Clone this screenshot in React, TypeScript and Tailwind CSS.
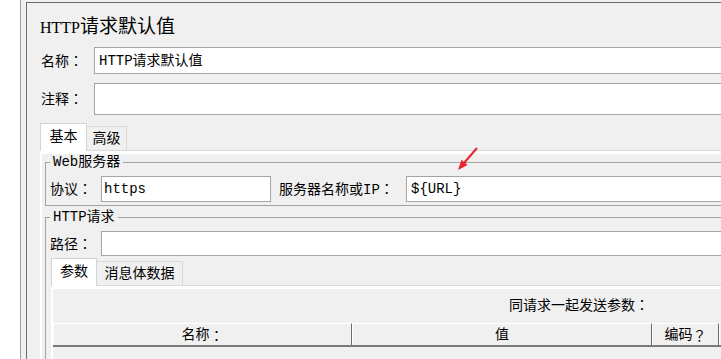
const field = 'border border-[#a5a5a5] bg-white';

// centred full-width colon, as in the reference font
const C = () => <span className="font-['Noto_Sans_CJK_JP',sans-serif]">：</span>;

const Tab = ({ label, active, w }: { label: string; active?: boolean; w: string }) =>
  active ? (
    <div className={`${w} flex h-[28px] items-center justify-center border border-b-0 border-[#d4d4d4] bg-white pb-[2px]`}>{label}</div>
  ) : (
    <div className={`${w} flex h-[25px] items-center justify-center border border-l-0 border-[#d9d9d9] bg-[#f0f0f0]`}>{label}</div>
  );

const headCell = 'flex items-center justify-center border-l border-r border-t border-l-white border-r-[#6d6d6d] border-t-white';

export default function App() {
  return (
    <div className="relative flex h-[359px] w-[721px] overflow-hidden bg-[#f0f0f0] text-[14px] leading-[16px] text-black font-['Liberation_Mono','Noto_Sans_CJK_SC',monospace]">
      {/* tree pane */}
      <div className="w-[21px] shrink-0 border-r border-[#a0a0a0] bg-white" />

      <div className="ml-[5px] mt-[2px] w-[780px] shrink-0 border-l border-t border-[#6b6b6b] pl-[13px]">
        <div className="h-[44px] pt-[14px] leading-[20px] font-['Liberation_Serif','Noto_Sans_CJK_SC',serif]">
          <span className="text-[16px]">HTTP</span>
          <span className="text-[19px]">请求默认值</span>
        </div>

        <div className="flex h-[27px] items-center pl-[1px]">
          <span className="w-[53px]">名称<C /></span>
          <div className={`${field} flex h-full flex-1 items-center px-[4px]`}>HTTP请求默认值</div>
        </div>
        <div className="mt-[9px] flex h-[32px] items-center pl-[1px]">
          <span className="w-[53px]">注释<C /></span>
          <div className={`${field} h-full flex-1`} />
        </div>

        {/* 基本 / 高级 */}
        <div className="mt-[8px] flex h-[28px] items-end">
          <Tab label="基本" active w="w-[47px]" />
          <Tab label="高级" w="w-[40px]" />
          <div className="flex-1 border-b border-[#d9d9d9]" />
        </div>
        <div className="border-l-2 border-t-[3px] border-white pl-[3px]">
          <fieldset className="border border-[#a3a3a3] px-[4px] pb-[3px]">
            <legend className="px-[3px] leading-[16px]">Web服务器</legend>
            <div className="mt-[6px] flex h-[26px] items-center">
              <span className="w-[51px]">协议<C /></span>
              <div className={`${field} flex h-full w-[170px] items-center px-[2px]`}>https</div>
              <span className="ml-[8px] w-[127px]">服务器名称或IP<C /></span>
              <div className={`${field} flex h-full flex-1 items-center px-[4px]`}>{'${URL}'}</div>
            </div>
          </fieldset>

          <fieldset className="mt-[3px] border border-[#a3a3a3] px-[4px]">
            <legend className="px-[3px] leading-[16px]">HTTP请求</legend>
            <div className="mt-[6px] flex h-[25px] items-center">
              <span className="w-[51px]">路径<C /></span>
              <div className={`${field} h-full flex-1`} />
            </div>

            {/* 参数 / 消息体数据 */}
            <div className="ml-[1px] mt-[2px] flex h-[28px] items-end">
              <Tab label="参数" active w="w-[46px]" />
              <Tab label="消息体数据" w="w-[86px]" />
              <div className="flex-1 border-b border-[#d9d9d9]" />
            </div>
            <div className="ml-[1px] h-[80px] border-l-2 border-t-[3px] border-white">
              <div className="pl-[456px] pt-[7px]">同请求一起发送参数<C /></div>
              <div className="mt-[9px] flex h-[24px] border-b-2 border-[#7a7a7a]">
                <div className={`${headCell} w-[299px]`}>名称<C /></div>
                <div className={`${headCell} w-[300px]`}>值</div>
                <div className={`${headCell} w-[67px]`}>编码<span className="font-['Noto_Sans_CJK_JP',sans-serif]">？</span></div>
                <div className="flex-1 border-l border-t border-white" />
              </div>
            </div>
          </fieldset>
        </div>
      </div>

      {/* red annotation arrow */}
      <svg className="absolute left-[450px] top-[140px] h-[35px] w-[35px]" viewBox="0 0 35 35">
        <line x1="27" y1="8" x2="14" y2="23" stroke="#e8242b" strokeWidth="2" />
        <polygon points="8,30 17.6,25 11.5,19.8" fill="#e8242b" />
      </svg>
    </div>
  );
}
